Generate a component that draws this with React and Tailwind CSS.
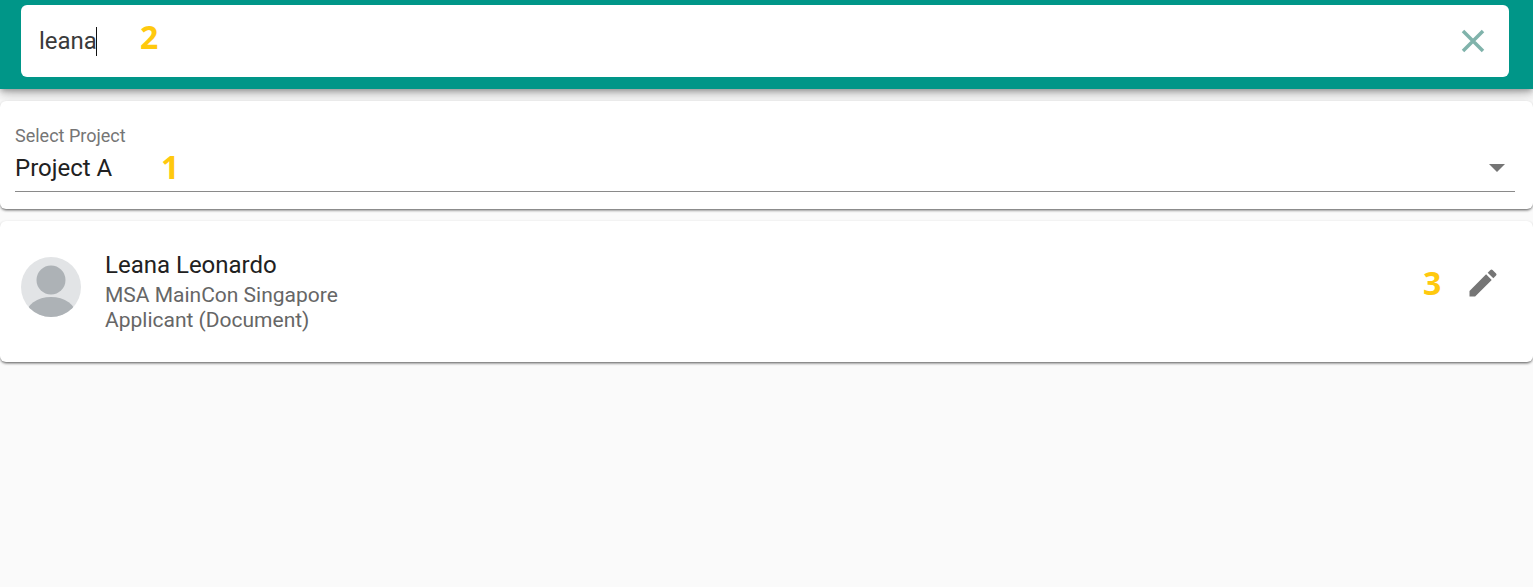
const roboto = "font-['Roboto',sans-serif]";

function Mark({ children, className }) {
  return (
    <span className={`absolute font-['Open_Sans',sans-serif] font-bold text-[32px] leading-none text-[#ffc90e] ${className}`}>
      {children}
    </span>
  );
}

export default function App() {
  return (
    <div className={`relative h-[587px] w-full overflow-hidden bg-[#fafafa] ${roboto}`}>
      <header className="relative z-10 h-[89px] bg-[#009688] pl-[21px] pr-[24px] pt-[5px] shadow-[0_3px_5px_-1px_rgba(0,0,0,0.25),0_6px_10px_0_rgba(0,0,0,0.14),0_1px_18px_0_rgba(0,0,0,0.12)]">
        <div className="relative flex h-[72px] items-center justify-between rounded-[6px] bg-white pl-[18px] pr-[24px]">
          <div className="flex items-center">
            <span className="text-[24px] leading-none text-[#3a3a3a]">leana</span>
            <span className="-ml-px h-[29px] w-px bg-[#111]" />
          </div>
          <Mark className="left-[119px] top-[16px]">2</Mark>
          <svg width="24" height="24" viewBox="0 0 24 24" fill="none" stroke="#80b3ab" strokeWidth="3.5" aria-hidden="true" className="mb-px h-[24px] w-[24px]">
            <path d="M2 2 22 22M22 2 2 22" />
          </svg>
        </div>
      </header>

      <main className="relative z-20 flex flex-col gap-[12px] pt-[12px]">
        <section className="relative h-[108px] rounded-[6px] bg-white pl-[15px] pr-[18px] pt-[25px] shadow-[0_2px_3px_-1px_rgba(0,0,0,0.55),0_1px_3px_0_rgba(0,0,0,0.2)]">
          <div className="text-[18px] leading-[20px] text-[#757575]">Select Project</div>
          <div className="flex h-[46px] items-center justify-between border-b-[1.5px] border-[#8a8a8a] pb-[2px]">
            <span className="text-[24px] leading-none text-[#212121]">Project A</span>
            <svg width="16" height="8" viewBox="0 0 16 8" aria-hidden="true" className="mr-[10px]">
              <path d="M0 0h16L8 8z" fill="#757575" />
            </svg>
          </div>
          <Mark className="left-[161px] top-[50px]">1</Mark>
        </section>

        <section className="relative flex h-[141px] items-start rounded-[6px] bg-white pl-[21px] pr-[24px] pt-[30px] shadow-[0_2px_3px_-1px_rgba(0,0,0,0.55),0_1px_3px_0_rgba(0,0,0,0.2)]">
          <svg width="60" height="60" viewBox="0 0 60 60" aria-hidden="true" className="mt-[6px] shrink-0">
            <defs>
              <clipPath id="avatar-clip"><circle cx="30" cy="30" r="30" /></clipPath>
            </defs>
            <circle cx="30" cy="30" r="30" fill="#e2e4e6" />
            <g clipPath="url(#avatar-clip)" fill="#adb2b6">
              <circle cx="30" cy="23" r="14.5" />
              <ellipse cx="30" cy="58" rx="25" ry="18" />
            </g>
          </svg>
          <div className="ml-[24px] flex flex-1 flex-col">
            <div className="text-[24px] leading-[28px] text-[#212121]">Leana Leonardo</div>
            <div className="mt-[4px] text-[21px] leading-[25px] text-[#666]">MSA MainCon Singapore</div>
            <div className="text-[21px] leading-[25px] text-[#666]">Applicant (Document)</div>
          </div>
          <Mark className="left-[1423px] top-[46px]">3</Mark>
          <svg width="36" height="36" viewBox="0 0 24 24" aria-hidden="true" className="mr-[8px] mt-[14px]">
            <path d="M3 17.25V21h3.75L17.81 9.94l-3.75-3.75L3 17.25zM20.71 7.04a1 1 0 0 0 0-1.41l-2.34-2.34a1 1 0 0 0-1.41 0l-1.83 1.83 3.75 3.75 1.83-1.83z" fill="#757575" />
          </svg>
        </section>
      </main>
    </div>
  );
}
